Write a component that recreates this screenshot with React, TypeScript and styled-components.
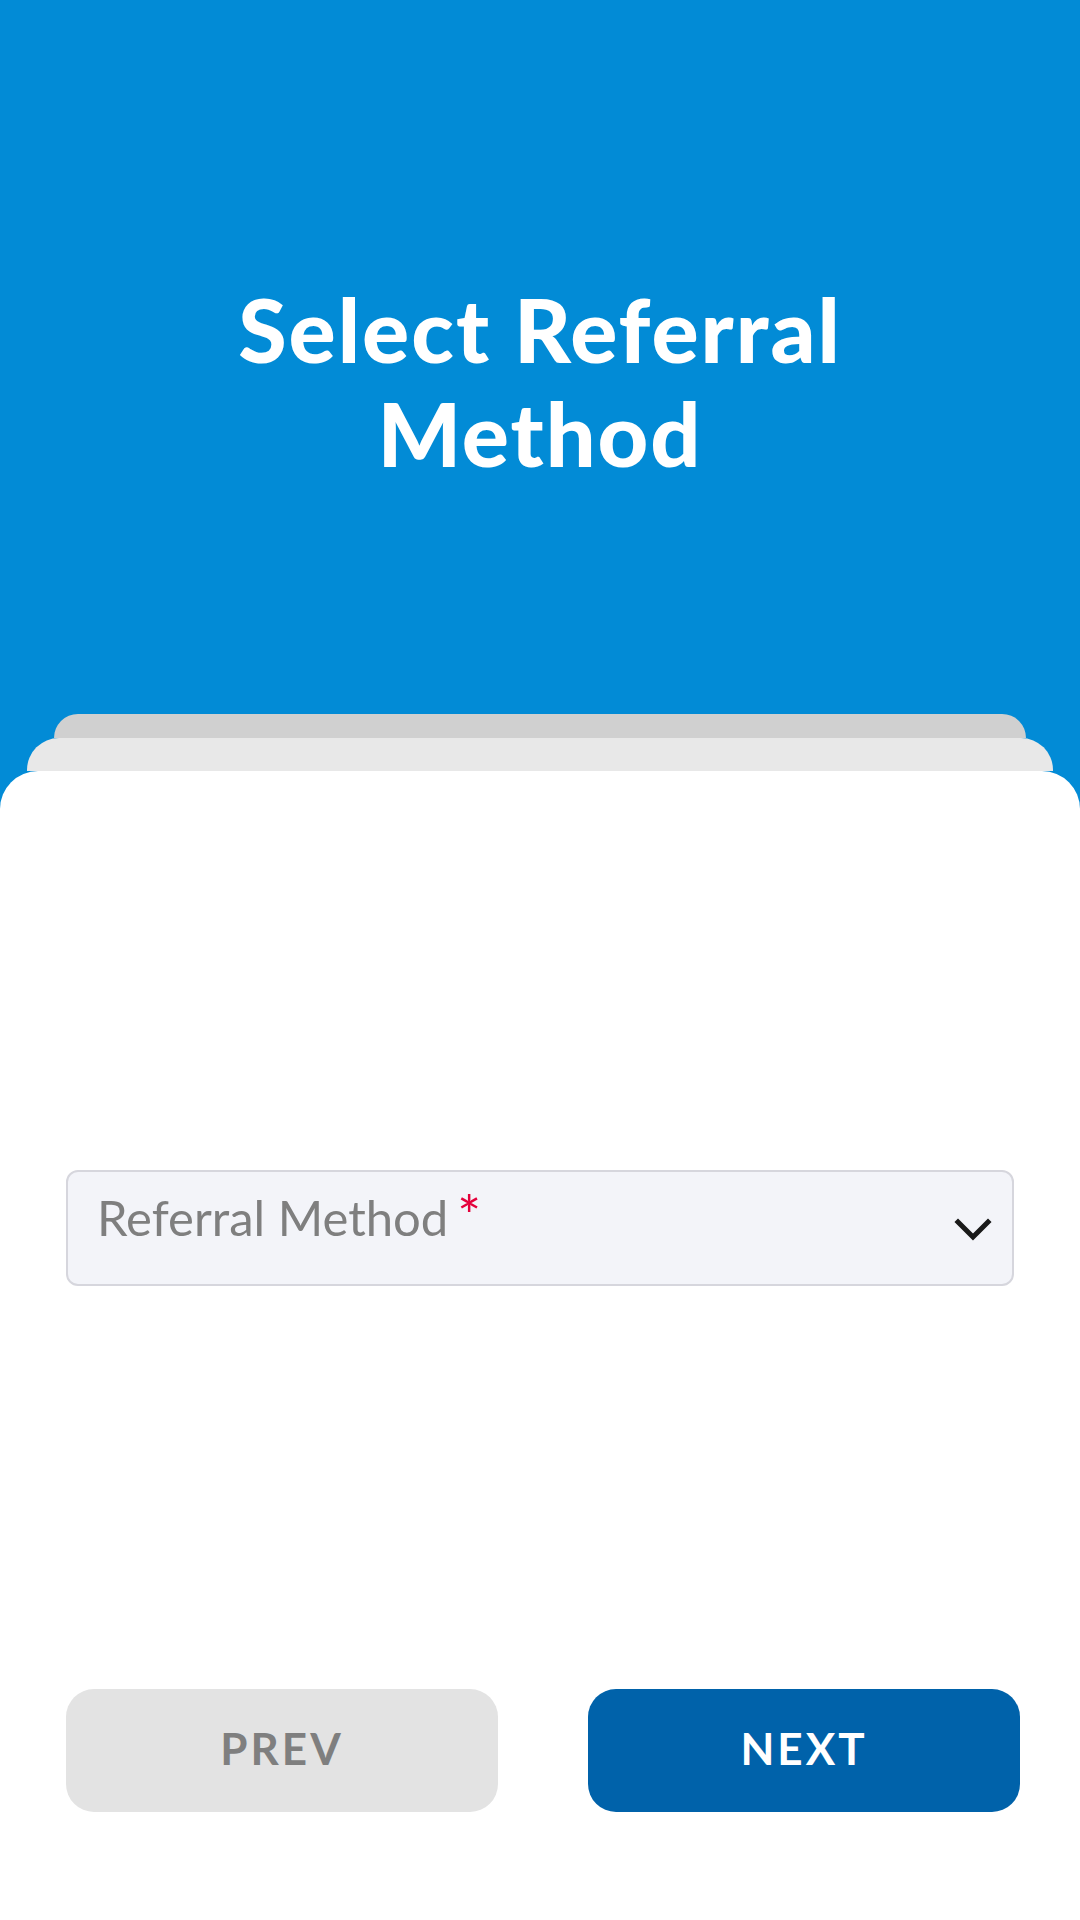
import React from "react";
import styled, { createGlobalStyle } from "styled-components";

const GlobalStyle = createGlobalStyle`
  html, body { margin: 0; padding: 0; }
  body { font-family: "Lato", "Noto Sans", sans-serif; background: #ffffff; }
  * { box-sizing: border-box; }
`;

const Screen = styled.div`
  width: 1080px;
  min-height: 1920px;
  display: flex;
  flex-direction: column;
  background: #028bd6;
`;

const Header = styled.header`
  height: 714px;
  padding-top: 277px;
  display: flex;
  justify-content: center;
`;

const Title = styled.h1`
  margin: 0;
  width: 780px;
  text-align: center;
  color: #ffffff;
  font-family: "Lato", sans-serif;
  font-weight: 900;
  font-size: 88px;
  line-height: 104px;
  letter-spacing: 2px;
`;

const Tab = styled.div<{ $inset: number; $height: number; $radius: number; $color: string }>`
  margin: 0 ${(p) => p.$inset}px;
  height: ${(p) => p.$height}px;
  background: ${(p) => p.$color};
  border-radius: ${(p) => p.$radius}px ${(p) => p.$radius}px 0 0;
`;

const Card = styled.main`
  flex: 1;
  background: #ffffff;
  border-radius: 38px 38px 0 0;
  padding: 399px 60px 108px 66px;
  display: flex;
  flex-direction: column;
`;

const SelectBox = styled.div`
  width: 948px;
  height: 116px;
  border: 2px solid #d6d6dd;
  border-radius: 12px;
  background: #f3f4f9;
  padding: 16px 19px 0 29px;
  display: flex;
  justify-content: space-between;
  align-items: flex-start;
`;

const Label = styled.span`
  font-family: "Lato", sans-serif;
  font-weight: 400;
  font-size: 49px;
  line-height: 1.2;
  color: #7f7f7f;
`;

const Required = styled.span`
  color: #e4003b;
  margin-left: 9px;
  font-size: 56px;
  line-height: 0;
`;

const Chevron = styled.svg`
  align-self: center;
  margin-top: -12px;
`;

const Spacer = styled.div`
  flex: 1;
`;

const ButtonRow = styled.div`
  display: flex;
  gap: 90px;
`;

const NavButton = styled.button<{ $primary?: boolean }>`
  flex: 0 0 432px;
  height: 123px;
  border: none;
  border-radius: 28px;
  background: ${(p) => (p.$primary ? "#0062aa" : "#e3e3e3")};
  color: ${(p) => (p.$primary ? "#ffffff" : "#7f7f7f")};
  font-family: "Lato", sans-serif;
  font-weight: 700;
  font-size: 44px;
  letter-spacing: 3px;
  padding: 0 0 5px 0;
  display: flex;
  align-items: center;
  justify-content: center;
`;

export default function App() {
  return (
    <Screen>
      <GlobalStyle />
      <Header>
        <Title>Select Referral Method</Title>
      </Header>
      <Tab $inset={54} $height={24} $radius={24} $color="#d0d0d0" />
      <Tab $inset={27} $height={33} $radius={32} $color="#e8e8e8" />
      <Card>
        <SelectBox>
          <Label>
            Referral Method<Required>*</Required>
          </Label>
          <Chevron width="40" height="26" viewBox="0 0 40 26">
            <polyline
              points="5,5 20,20 35,5"
              fill="none"
              stroke="#1a1a1a"
              strokeWidth="5"
              strokeLinecap="square"
            />
          </Chevron>
        </SelectBox>
        <Spacer />
        <ButtonRow>
          <NavButton>PREV</NavButton>
          <NavButton $primary>NEXT</NavButton>
        </ButtonRow>
      </Card>
    </Screen>
  );
}
